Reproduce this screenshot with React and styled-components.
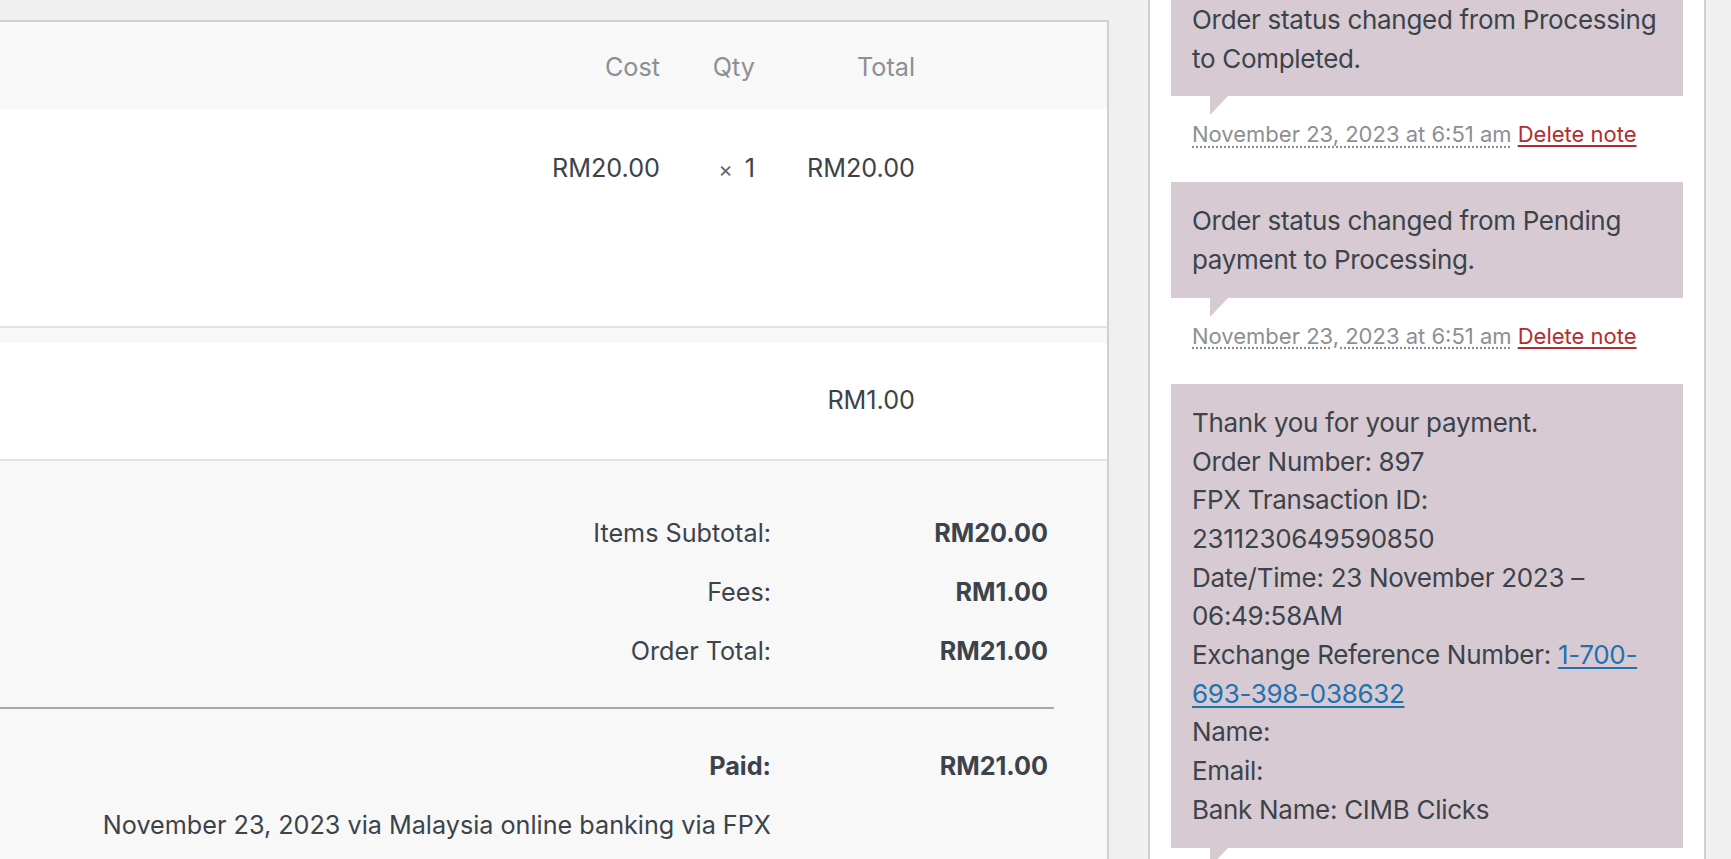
import React from 'react'
import styled, { createGlobalStyle } from 'styled-components'

const GlobalStyle = createGlobalStyle`
    html, body {
        margin: 0;
        padding: 0;
        background: #f0f0f1;
        overflow: hidden;
    }
    body {
        font-family: Inter, "Noto Sans", sans-serif;
        color: #3c434a;
    }
`

const Page = styled.div`
    display: flex;
    align-items: flex-start;
    height: 859px;
    overflow: hidden;
`

const ItemsPanel = styled.section`
    flex: none;
    width: 1109px;
    min-height: 839px;
    margin-top: 20px;
    box-sizing: border-box;
    background: #f8f8f8;
    border-top: 2px solid #cfd0d2;
    border-right: 2px solid #cfd0d2;
    font-size: 25.2px;
`

const Row = styled.div`
    display: grid;
    grid-template-columns: 1fr 160px 95px 160px 192px;
    box-sizing: border-box;
    height: ${p => p.$height}px;
    padding-top: ${p => p.$pad || 0}px;
    margin-top: ${p => p.$gap || 0}px;
    align-items: ${p => (p.$head ? 'center' : 'start')};
    background: ${p => (p.$head ? '#f8f8f8' : '#fff')};
    color: ${p => (p.$head ? '#8c8f94' : '#3c434a')};
    border-bottom: ${p => (p.$head ? 'none' : '2px solid #e2e3e4')};
    line-height: 39px;
`

const Cell = styled.div`
    text-align: right;
    white-space: nowrap;
`

const Times = styled.small`
    font-size: 22px;
    color: #646970;
    margin-right: 12px;
`

const Totals = styled.div`
    padding: 42px 0 0;
`

const TotalsGrid = styled.div`
    display: grid;
    grid-template-columns: 1fr 277px;
    padding-right: 59px;
`

const TotalLabel = styled.div`
    height: 59px;
    display: flex;
    align-items: center;
    justify-content: flex-end;
    font-weight: ${p => (p.$bold ? 700 : 400)};
    white-space: nowrap;
`

const TotalValue = styled.div`
    height: 59px;
    display: flex;
    align-items: center;
    justify-content: flex-end;
    font-weight: 700;
`

const Divider = styled.hr`
    border: none;
    height: 2px;
    background: #a7aaad;
    margin: 27px 53px 27px 0;
`

const Sidebar = styled.aside`
    flex: none;
    width: 558px;
    height: 900px;
    margin: -19px 0 0 39px;
    box-sizing: border-box;
    background: #fff;
    border-left: 2px solid #cfd0d2;
    border-right: 2px solid #cfd0d2;
    padding: 0 21px;
`

const NoteList = styled.ul`
    list-style: none;
    margin: 0;
    padding: 0;
`

const Note = styled.li`
    margin: 0;
`

const NoteContent = styled.div`
    position: relative;
    background: #d7cad2;
    padding: 20px 21px 18px;
    font-size: 26px;
    letter-spacing: -0.3px;
    line-height: 38.7px;
    color: #3c434a;
    white-space: nowrap;
    &::after {
        content: '';
        position: absolute;
        left: 39px;
        bottom: -19px;
        border-style: solid;
        border-width: 19px 18px 0 0;
        border-color: #d7cad2 transparent transparent transparent;
    }
`

const Meta = styled.p`
    margin: 0;
    padding: 18px 21px 28px;
    font-size: 22px;
    line-height: 40px;
    color: #8c8f94;
    white-space: nowrap;
    abbr {
        text-decoration: underline dotted;
        text-underline-offset: 4px;
    }
    a {
        color: #b32d2e;
        text-decoration: underline;
        text-underline-offset: 3px;
    }
`

const Link = styled.a`
    color: #2271b1;
    text-decoration: underline;
    text-underline-offset: 3px;
`

const notes = [
    {
        lines: ['Order status changed from Processing', 'to Completed.'],
        date: 'November 23, 2023 at 6:51 am',
    },
    {
        lines: ['Order status changed from Pending', 'payment to Processing.'],
        date: 'November 23, 2023 at 6:51 am',
    },
]

export default function App() {
    return (
        <>
            <GlobalStyle />
            <Page>
                <ItemsPanel>
                    <Row $head $height={87} $pad={4}>
                        <Cell />
                        <Cell>Cost</Cell>
                        <Cell>Qty</Cell>
                        <Cell>Total</Cell>
                        <Cell />
                    </Row>
                    <Row $height={219} $pad={40}>
                        <Cell />
                        <Cell>RM20.00</Cell>
                        <Cell><Times>×</Times>1</Cell>
                        <Cell>RM20.00</Cell>
                        <Cell />
                    </Row>
                    <Row $height={118} $pad={38} $gap={15}>
                        <Cell />
                        <Cell />
                        <Cell />
                        <Cell>RM1.00</Cell>
                        <Cell />
                    </Row>
                    <Totals>
                        <TotalsGrid>
                            <TotalLabel>Items Subtotal:</TotalLabel>
                            <TotalValue>RM20.00</TotalValue>
                            <TotalLabel>Fees:</TotalLabel>
                            <TotalValue>RM1.00</TotalValue>
                            <TotalLabel>Order Total:</TotalLabel>
                            <TotalValue>RM21.00</TotalValue>
                        </TotalsGrid>
                        <Divider />
                        <TotalsGrid>
                            <TotalLabel $bold>Paid:</TotalLabel>
                            <TotalValue>RM21.00</TotalValue>
                            <TotalLabel>November 23, 2023 via Malaysia online banking via FPX</TotalLabel>
                            <div />
                        </TotalsGrid>
                    </Totals>
                </ItemsPanel>
                <Sidebar>
                    <NoteList>
                        {notes.map((n, i) => (
                            <Note key={i}>
                                <NoteContent>
                                    {n.lines[0]}<br />{n.lines[1]}
                                </NoteContent>
                                <Meta>
                                    <abbr>{n.date}</abbr> <a href="#">Delete note</a>
                                </Meta>
                            </Note>
                        ))}
                        <Note>
                            <NoteContent>
                                Thank you for your payment.<br />
                                Order Number: 897<br />
                                FPX Transaction ID:<br />
                                2311230649590850<br />
                                Date/Time: 23 November 2023 –<br />
                                06:49:58AM<br />
                                Exchange Reference Number: <Link href="#">1-700-<br />693-398-038632</Link><br />
                                Name:<br />
                                Email:<br />
                                Bank Name: CIMB Clicks
                            </NoteContent>
                        </Note>
                    </NoteList>
                </Sidebar>
            </Page>
        </>
    )
}
